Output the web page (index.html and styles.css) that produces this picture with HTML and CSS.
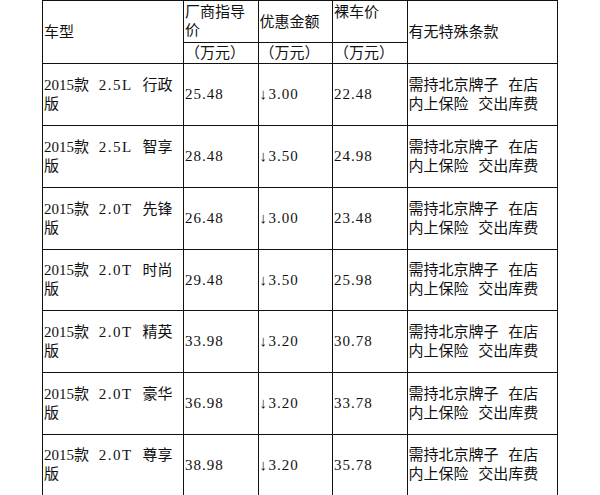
FILE: index.html
```html
<!DOCTYPE html>
<html lang="zh">
<head>
<meta charset="utf-8">
<link rel="stylesheet" href="styles.css">
</head>
<body>
<table class="price">
  <colgroup>
    <col class="c-model"><col class="c-num"><col class="c-num"><col class="c-num"><col class="c-note">
  </colgroup>
  <tr class="h1">
    <td rowspan="2">车型</td>
    <td class="top">厂商指导<br>价</td>
    <td>优惠金额</td>
    <td class="top">裸车价</td>
    <td rowspan="2">有无特殊条款</td>
  </tr>
  <tr class="h2">
    <td>（万元）</td>
    <td>（万元）</td>
    <td>（万元）</td>
  </tr>
  <tr class="r"><td>2015款 <span class="lat">2.5L</span> 行政<br>版</td><td class="n">25.48</td><td class="n"><span class="arr">↓</span>3.00</td><td class="n">22.48</td><td>需持北京牌子 在店<br>内上保险 交出库费</td></tr>
  <tr class="r"><td>2015款 <span class="lat">2.5L</span> 智享<br>版</td><td class="n">28.48</td><td class="n"><span class="arr">↓</span>3.50</td><td class="n">24.98</td><td>需持北京牌子 在店<br>内上保险 交出库费</td></tr>
  <tr class="r"><td>2015款 <span class="lat">2.0T</span> 先锋<br>版</td><td class="n">26.48</td><td class="n"><span class="arr">↓</span>3.00</td><td class="n">23.48</td><td>需持北京牌子 在店<br>内上保险 交出库费</td></tr>
  <tr class="r s"><td>2015款 <span class="lat">2.0T</span> 时尚<br>版</td><td class="n">29.48</td><td class="n"><span class="arr">↓</span>3.50</td><td class="n">25.98</td><td>需持北京牌子 在店<br>内上保险 交出库费</td></tr>
  <tr class="r"><td>2015款 <span class="lat">2.0T</span> 精英<br>版</td><td class="n">33.98</td><td class="n"><span class="arr">↓</span>3.20</td><td class="n">30.78</td><td>需持北京牌子 在店<br>内上保险 交出库费</td></tr>
  <tr class="r"><td>2015款 <span class="lat">2.0T</span> 豪华<br>版</td><td class="n">36.98</td><td class="n"><span class="arr">↓</span>3.20</td><td class="n">33.78</td><td>需持北京牌子 在店<br>内上保险 交出库费</td></tr>
  <tr class="r s"><td>2015款 <span class="lat">2.0T</span> 尊享<br>版</td><td class="n">38.98</td><td class="n"><span class="arr">↓</span>3.20</td><td class="n">35.78</td><td>需持北京牌子 在店<br>内上保险 交出库费</td></tr>
</table>
</body>
</html>
```

FILE: styles.css
```css
html, body {
  margin: 0;
  padding: 0;
  background: #fff;
}
body {
  font-family: "Liberation Serif", "Noto Sans CJK SC", serif;
  font-size: 15px;
  color: #111;
}
.price {
  margin-left: 42px;
  border-collapse: collapse;
  table-layout: fixed;
  width: 515px;
}
.c-model { width: 141px; }
.c-num { width: 74.5px; }
.c-note { width: 150px; }
.price td {
  border: 1px solid #111;
  padding: 0 1px;
  line-height: 19px;
  vertical-align: middle;
  text-align: left;
  word-spacing: 6px;
  white-space: nowrap;
  overflow: hidden;
}
.price td.n { letter-spacing: 1px; }
.lat { letter-spacing: 1.5px; }
.price .h1 td { height: 39px; line-height: 18px; }
.price .h1 td.top { vertical-align: top; padding-top: 2px; }
.price .h2 td { height: 20px; line-height: 20px; }
.price .r td { height: 61px; }
.price .r.s td { height: 60px; }
.arr {
  display: inline-block;
  width: 8px;
  margin-right: 1px;
}
```
